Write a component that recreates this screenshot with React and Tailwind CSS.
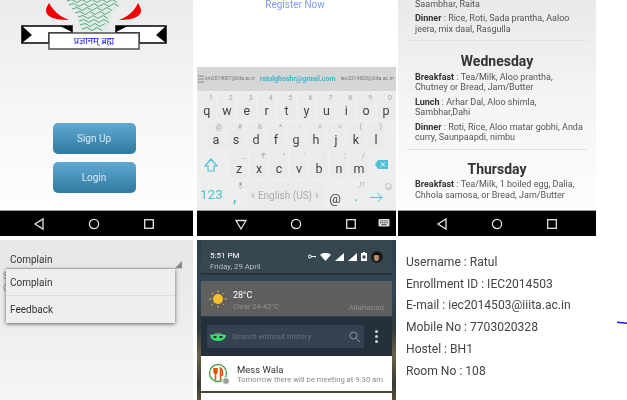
const roboto = { fontFamily: 'Roboto, "Noto Sans", sans-serif' }

const row1 = [['q', '1'], ['w', '2'], ['e', '3'], ['r', '4'], ['t', '5'], ['y', '6'], ['u', '7'], ['i', '8'], ['o', '9'], ['p', '0']]
const row2 = [['a', '@'], ['s', '#'], ['d', '&'], ['f', '*'], ['g', '-'], ['h', '+'], ['j', '='], ['k', '('], ['l', ')']]
const row3 = [['z', '_'], ['x', '₹'], ['c', '"'], ['v', "'"], ['b', ':'], ['n', ';'], ['m', '/']]

// zigzag rows of the logo's tree
const waves = [
  [1, 67, 121], [5, 69, 119], [9, 72, 116], [13, 75, 113], [17, 78, 111], [21, 79, 110], [25, 80, 108], [29, 82, 106],
].map(([y, a, b]) => {
  let d = `M${a} ${y}`
  for (let x = a + 5, up = true; x <= b; x += 5, up = !up) d += `L${x} ${up ? y - 1.5 : y + 1.5}`
  return d
}).join('')

function Key({ letter, hint }) {
  return (
    <div className="relative w-[18px] h-[27px] mx-[1px] bg-[#ebebeb] rounded-[2px] flex items-end justify-center pb-[2px]">
      <span className="absolute top-[1px] right-[3px] text-[7px] leading-[9px] text-[#a5a5a5]">{hint}</span>
      <span className="text-[12.5px] leading-[15px] text-[#444]">{letter}</span>
    </div>
  )
}

function NavBar({ pad, down, keyboard }) {
  return (
    <div className={`relative h-[26px] shrink-0 bg-black border-t border-[#999] flex items-center gap-[41px] ${pad}`}>
      <svg width="14" height="14" viewBox="0 0 14 14" fill="none" stroke="#e4e4e4" strokeWidth="1.3">
        {down ? <path d="M2 3.5h10L7 12z" /> : <path d="M11 2v10L3 7z" />}
      </svg>
      <svg width="14" height="14" viewBox="0 0 14 14" fill="none" stroke="#e4e4e4" strokeWidth="1.3">
        <circle cx="7" cy="7" r="4.6" />
      </svg>
      <svg width="14" height="14" viewBox="0 0 14 14" fill="none" stroke="#e4e4e4" strokeWidth="1.3">
        <rect x="2.7" y="2.7" width="8.6" height="8.6" />
      </svg>
      {keyboard && (
        <svg className="absolute right-[6px] top-[6px]" width="12" height="12" viewBox="0 0 12 12">
          <rect x="0.5" y="2" width="11" height="7.5" rx="1" fill="#dcdcdc" />
          <path d="M2 4h1.4M4 4h1.4M6.2 4h1.4M8.4 4h1.4M2 5.8h1.4M4 5.8h1.4M6.2 5.8h1.4M8.4 5.8h1.4M3.5 7.7h5" stroke="#222" strokeWidth="0.8" />
        </svg>
      )}
    </div>
  )
}

function Logo() {
  return (
    <svg className="shrink-0" width="193" height="52" viewBox="0 0 193 52">
      <path d="M49 3c-4 6-4 10 0 13 4 3 12 4 20 4-8-3-15-8-20-17z" fill="#f20000" />
      <path d="M138 3c4 6 4 10 0 13-4 3-12 4-19 4 8-3 15-8 19-17z" fill="#f20000" />
      <path d="M65 0H123L112 14L108 31H80L77 14Z" fill="#dfece5" />
      <path d={waves} fill="none" stroke="#5fa586" strokeWidth="1" />
      <path d="M22 26H72V33H49V43H22Z" fill="#fff" stroke="#000" strokeWidth="1.5" />
      <path d="M166 26H116V33H139V43H166Z" fill="#fff" stroke="#000" strokeWidth="1.5" />
      <path d="M22 26L32 35L22 43ZM60 26H72V32ZM166 26L156 35L166 43ZM128 26H116V32Z" fill="#000" />
      <rect x="49" y="33" width="90" height="16" fill="#fff" stroke="#444" strokeWidth="1.4" />
      <text x="94" y="44" textAnchor="middle" fontSize="9.5" fill="#1a1aee" style={{ fontFamily: '"Noto Sans", sans-serif' }}>प्रज्ञानम् ब्रह्म</text>
    </svg>
  )
}

function BlueButton({ children }) {
  return (
    <button className="w-[83px] h-[31px] rounded-[5px] bg-gradient-to-b from-[#5fa9d4] to-[#2f7a9f] text-[#dbe9f2] text-[10px]">
      {children}
    </button>
  )
}

function MenuLine({ label, text }) {
  return (
    <p className="text-[9px] leading-[10.7px] text-[#555] mb-[3.6px] w-[168px]">
      {label && <b className="font-bold text-[#333]">{label}</b>}
      {text}
    </p>
  )
}

function Welcome() {
  return (
    <div className="w-[193px] flex flex-col bg-gradient-to-b from-[#ebebeb] via-[#f7f7f7] to-white">
      <Logo />
      <div className="flex-1 flex flex-col items-center gap-[8px] pt-[71px] pr-[5px]">
        <BlueButton>Sign Up</BlueButton>
        <BlueButton>Login</BlueButton>
      </div>
      <NavBar pad="pl-[32px]" />
    </div>
  )
}

function Keyboard() {
  return (
    <div className="w-[199px] flex flex-col bg-white">
      <div className="h-[67px] text-center text-[10px] leading-[9px] text-[#7f9cf5] pr-[3px]">Register Now</div>
      <div className="flex-1 bg-[#eeeeee] flex flex-col">
        <div className="h-[24px] bg-[#d6d6d6] flex items-center justify-between pl-[1px] pr-[2px] text-[5px] text-[#777]">
          <span className="flex items-center gap-[1px]">
            <svg width="6" height="8" viewBox="0 0 6 8"><path d="M0 1h6M0 4h6M0 7h6" stroke="#777" strokeWidth="0.8" /></svg>
            iim2014007@iiita.ac.ir
          </span>
          <span className="text-[7px] font-bold text-[#3fb5cf]">ratulghoshr@gmail.com</span>
          <span className="text-[5.300px]">iec2014503@iiita.ac.in</span>
        </div>
        <div className="flex justify-center pt-[2px] pb-[1px]">
          {row1.map(([l, h]) => <Key key={l} letter={l} hint={h} />)}
        </div>
        <div className="flex justify-center pt-[1px] pb-[1px] pr-[1px]">
          {row2.map(([l, h]) => <Key key={l} letter={l} hint={h} />)}
        </div>
        <div className="flex items-center pt-[1px] pb-[1px] pl-[2px]">
          <svg className="mx-[4px]" width="16" height="16" viewBox="0 0 16 16" fill="none" stroke="#4fc0d8" strokeWidth="1.2">
            <path d="M8 2l6 7h-3v5H5V9H2z" />
          </svg>
          <div className="flex ml-[6px]">
            {row3.map(([l, h]) => <Key key={l} letter={l} hint={h} />)}
          </div>
          <svg className="ml-[6px]" width="13" height="10" viewBox="0 0 13 10">
            <path d="M3 0h10v9H3L0 4.500z" fill="#4fc0d8" />
            <path d="M6 2.500l4 4M10 2.500l-4 4" stroke="#fff" strokeWidth="1" />
          </svg>
        </div>
        <div className="relative flex-1 flex items-center">
          <span className="w-[27px] pl-[3px] text-[13.5px] text-[#4fc0d8]">123</span>
          <span className="w-[24px] text-[14px] font-bold text-[#4fc0d8] pl-[9px] pt-[5px]">,</span>
          <div className="w-[76px] h-[27px] bg-[#ebebeb] rounded-[2px] text-[10px] text-[#aaa] flex items-center justify-between px-[4px] pt-[1px] -ml-[1px]">
            <span className="text-[13px]">‹</span>English (US)<span className="text-[13px]">›</span>
          </div>
          <span className="w-[22px] text-center text-[13px] text-[#444] pt-[8px] ml-[1px]">@</span>
          <span className="w-[20px] text-center text-[11px] font-bold text-[#4fc0d8] pt-[8px]">.</span>
          <svg className="ml-[4px] mt-[5px]" width="13" height="11" viewBox="0 0 13 11" fill="none" stroke="#4fc0d8" strokeWidth="1">
            <path d="M0 5.500h12M7.500 1l4.500 4.500L7.500 10" />
          </svg>
          <svg className="absolute left-[41px] top-[3px]" width="5" height="7" viewBox="0 0 5 7" fill="#aaa"><rect x="1.300" width="2.400" height="4" rx="1.200" /><path d="M0 3.500a2.500 2.500 0 0 0 5 0M2.500 6v1" stroke="#aaa" strokeWidth="0.5" fill="none" /></svg>
          <span className="absolute left-[161px] top-[2px] text-[7px] leading-[9px] text-[#a5a5a5]">,!?</span>
          <svg className="absolute left-[188px] top-[4px]" width="7" height="7" viewBox="0 0 7 7" fill="none" stroke="#aaa" strokeWidth="0.7"><circle cx="3.500" cy="3.500" r="3" /><path d="M2 4.300c1 1 2 1 3 0" /></svg>
        </div>
      </div>
      <NavBar pad="pl-[37px]" down keyboard />
    </div>
  )
}

function MessMenu() {
  return (
    <div className="ml-[2px] w-[198px] flex flex-col">
      <div className="relative flex-1 overflow-hidden bg-gradient-to-b from-[#e9e9e9] via-[#f5f5f5] to-[#fdfdfd] pl-[17px]" style={roboto}>
        <div className="-mt-[1px]">
          <MenuLine text="Saambhar, Raita" />
          <MenuLine label="Dinner" text=" : Rice, Roti, Sada prantha, Aaloo jeera, mix daal, Rasgulla" />
        </div>
        <div className="-ml-[8px] w-[180px] border-t border-[#e2e2e2] mt-[5.5px] mb-[11.5px]" />
        <h3 className="w-[164px] mb-[2px] text-center text-[14px] leading-[17px] font-bold text-[#333]">Wednesday</h3>
        <MenuLine label="Breakfast" text=" : Tea/Milk, Aloo prantha, Chutney or Bread, Jam/Butter" />
        <MenuLine label="Lunch" text=" : Arhar Dal, Aloo shimla, Sambhar,Dahi" />
        <MenuLine label="Dinner" text=" : Roti, Rice, Aloo matar gobhi, Anda curry, Saunpaapdi, nimbu" />
        <div className="-ml-[8px] w-[180px] border-t border-[#e2e2e2] mt-[6px] mb-[11px]" />
        <h3 className="w-[164px] mb-[1px] text-center text-[14px] leading-[17px] font-bold text-[#333]">Thursday</h3>
        <MenuLine label="Breakfast" text=" : Tea/Milk, 1 boiled egg, Dalia, Chhola samosa, or Bread, Jam/Butter" />
      </div>
      <NavBar pad="pl-[37px]" />
    </div>
  )
}

function ComplainForm() {
  return (
    <div className="relative w-[193px] h-[160px] bg-gradient-to-b from-[#e6e6e6] to-[#f5f5f5] pl-[6px] pt-[14px]" style={roboto}>
      <div className="relative w-[176px] h-[15px] border-b border-[#c4c4c4] pl-[4px] text-[10px] leading-[12px] text-[#333]">
        Complain
        <svg className="absolute right-0 bottom-0" width="7" height="7" viewBox="0 0 7 7"><path d="M7 0v7H0z" fill="#8a8a8a" /></svg>
      </div>
      <span className="absolute left-[3px] top-[31px] text-[9px] leading-[11px] text-[#999]">S</span>
      <span className="absolute left-[3px] top-[43px] text-[9px] leading-[11px] text-[#999]">C</span>
      <div className="relative w-[169px] h-[54px] bg-[#eeeeee] shadow-[0_1px_4px_rgba(0,0,0,0.6)] text-[10px] text-[#333]">
        <div className="h-[27px] pl-[4px] flex items-center border-b border-[#dcdcdc]">Complain</div>
        <div className="h-[27px] pl-[4px] flex items-center">Feedback</div>
      </div>
    </div>
  )
}

function NotificationShade() {
  return (
    <div className="ml-[4px] w-[199px] h-[160px] overflow-hidden px-[4px] bg-[linear-gradient(180deg,#2b3d4e_0%,#33465a_30%,#2c3a38_55%,#6b6048_72%,#3a3a34_90%,#5a4e38_100%)] flex flex-col" style={roboto}>
      <div className="h-[33px] shrink-0 bg-[#37474f] flex items-center justify-between pl-[9px] pr-[9px] shadow-[0_2px_0_#29353b]">
        <div className="pt-[8px]">
          <p className="text-[8px] leading-[11px] text-white">5:51 PM</p>
          <p className="text-[7.800px] leading-[11px] text-[#b6bec2]">Friday, 29 April</p>
        </div>
        <div className="flex items-center gap-[4px]">
          <svg width="8" height="5" viewBox="0 0 8 5"><circle cx="1.800" cy="2.500" r="1.500" fill="none" stroke="#fff" /><path d="M3 2.500h5v1.500" stroke="#fff" fill="none" /></svg>
          <svg width="11" height="8" viewBox="0 0 11 8"><path d="M0 1.800a8.500 8.500 0 0 1 11 0L5.500 8z" fill="#fff" /></svg>
          <svg width="9" height="8" viewBox="0 0 9 8"><path d="M9 0v8H0z" fill="#fff" /></svg>
          <svg width="9" height="8" viewBox="0 0 9 8"><path d="M9 0v8H0z" fill="#fff" /></svg>
          <svg width="6" height="9" viewBox="0 0 6 9"><rect width="6" height="8" y="1" fill="#fff" /><rect x="2" width="2" height="1" fill="#fff" /><rect x="1.500" y="3.500" width="3" height="3" fill="#37474f" /></svg>
          <svg width="12" height="12" viewBox="0 0 12 12">
            <circle cx="6" cy="6" r="6" fill="#1d1d1d" />
            <ellipse cx="5.500" cy="6.500" rx="2.500" ry="3.500" fill="#b98a6a" />
            <path d="M2.500 4c1-3 6-3 7 0z" fill="#120c08" />
          </svg>
        </div>
      </div>
      <div className="mt-[8px] h-[35px] shrink-0 bg-[#5f5f5f] flex items-center relative pl-[7px]">
        <svg width="20" height="20" viewBox="0 0 20 20">
          <circle cx="10" cy="10" r="5" fill="#fbc02d" />
          <path d="M10 1v2.500M10 16.500V19M1 10h2.500M16.500 10H19M3.600 3.600l1.800 1.800M14.600 14.600l1.800 1.800M16.400 3.600l-1.800 1.800M5.400 14.600l-1.800 1.800" stroke="#e0b04a" strokeWidth="1" />
        </svg>
        <div className="ml-[5px] pt-[4px]">
          <p className="text-[9px] leading-[11px] text-white">28°C</p>
          <p className="text-[7.500px] leading-[11px] text-[#8f8f8f]">Clear 24-42°C</p>
        </div>
        <span className="absolute right-[8px] bottom-[4px] text-[8px] leading-[9px] text-[#8c8c8c]">Allahabad</span>
      </div>
      <div className="mt-[1px] h-[39px] shrink-0 bg-[#24303c] flex items-center pl-[6px]">
        <div className="w-[157px] h-[23px] bg-[#34434f] rounded-[2px] flex items-center pl-[3px] pr-[4px]">
          <svg width="16" height="11" viewBox="0 0 16 11">
            <path d="M3 4.500c1-4 9-4 10 0z" fill="#66757b" />
            <path d="M0 4c4-1 12-1 16 0c0 3-3 6-8 6S0 7 0 4z" fill="#37e06e" />
            <ellipse cx="5" cy="6" rx="1.800" ry="1" fill="#1f2a2a" />
            <ellipse cx="11" cy="6" rx="1.800" ry="1" fill="#1f2a2a" />
          </svg>
          <span className="ml-[6px] flex-1 text-[8px] text-[#65747b]">Search without history</span>
          <svg width="11" height="11" viewBox="0 0 11 11" fill="none" stroke="#8a979c" strokeWidth="1"><circle cx="4.500" cy="4.500" r="3.500" /><path d="M7 7l4 4" /></svg>
        </div>
        <div className="ml-[11px] flex flex-col gap-[2px]">
          <span className="w-[3px] h-[3px] rounded-full bg-[#cfd5d8]" />
          <span className="w-[3px] h-[3px] rounded-full bg-[#cfd5d8]" />
          <span className="w-[3px] h-[3px] rounded-full bg-[#cfd5d8]" />
        </div>
      </div>
      <div className="h-[35px] shrink-0 bg-white flex items-center pl-[7px]">
        <div className="relative w-[22px] h-[22px]">
          <svg width="22" height="22" viewBox="0 0 22 22" fill="none">
            <circle cx="10" cy="10" r="8.500" stroke="#43a047" strokeWidth="1.300" />
            <path d="M6 5v4a1.500 1.500 0 0 0 3 0V5M7.500 5v12M12.500 17V5c2 1 2 5 2 7h-2" stroke="#e65100" strokeWidth="1.500" />
          </svg>
          <span className="absolute right-0 bottom-0 w-[8px] h-[8px] rounded-full bg-[#9e9e9e] border border-white" />
        </div>
        <div className="ml-[7px] pt-[1px]">
          <p className="text-[9.500px] leading-[11px] text-[#333]">Mess Wala</p>
          <p className="text-[7.700px] leading-[10px] text-[#8a8a8a] whitespace-nowrap">Tomorrow there will be meeting at 9.30 am.</p>
        </div>
      </div>
      <div className="mt-[2px] h-[8px] shrink-0 bg-white" />
    </div>
  )
}

const profile = ['Username : Ratul', 'Enrollment ID : IEC2014503', 'E-mail : iec2014503@iiita.ac.in', 'Mobile No : 7703020328', 'Hostel : BH1', 'Room No : 108']

function Profile() {
  return (
    <div className="relative flex-1 pl-[10px] pt-[12px] text-[12.100px] leading-[21.700px] text-[#444]" style={roboto}>
      {profile.map((line) => <p key={line}>{line}</p>)}
      <svg className="absolute left-[221px] top-[81px]" width="10" height="4" viewBox="0 0 10 4">
        <path d="M0 1.200l10 1" stroke="#1a1ad0" strokeWidth="1.500" fill="none" />
      </svg>
    </div>
  )
}

export default function App() {
  return (
    <div className="w-[627px] h-[400px] overflow-hidden bg-white flex flex-col gap-[4px] blur-[0.4px]" style={roboto}>
      <div className="h-[236px] flex gap-[4px]">
        <Welcome />
        <div className="flex">
          <Keyboard />
          <MessMenu />
        </div>
      </div>
      <div className="flex">
        <ComplainForm />
        <NotificationShade />
        <Profile />
      </div>
    </div>
  )
}
